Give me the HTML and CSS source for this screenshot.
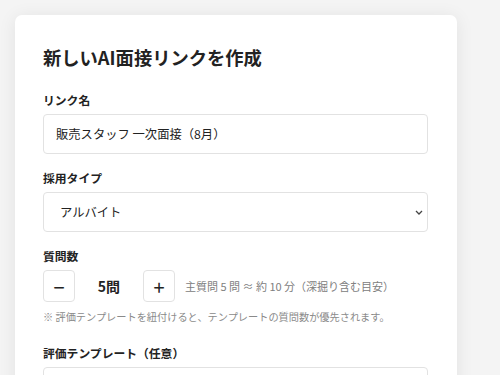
FILE: index.html
```html
<!DOCTYPE html>
<html lang="ja">

<head>
    <meta charset="UTF-8">
    <title>新しいAI面接リンクを作成</title>
    <link rel="stylesheet" href="styles.css">
</head>

<body>

    <div class="card">
        <h1 class="title">新しいAI面接リンクを作成</h1>

        <div class="field">
            <label class="label">リンク名</label>
            <div class="input">販売スタッフ 一次面接（8月）</div>
        </div>

        <div class="field">
            <label class="label">採用タイプ</label>
            <div class="input select">
                <span>アルバイト</span>
                <svg class="chevron" width="8" height="5" viewBox="0 0 8 5">
                    <path d="M1 1 L4 4 L7 1" fill="none" stroke="#444" stroke-width="1.3" />
                </svg>
            </div>
        </div>

        <div class="field">
            <label class="label">質問数</label>
            <div class="counter">
                <div class="step">&minus;</div>
                <div class="count">5問</div>
                <div class="step">+</div>
                <div class="hint">主質問 5 問 ≈ 約 10 分（深掘り含む目安）</div>
            </div>
            <p class="note">※ 評価テンプレートを紐付けると、テンプレートの質問数が優先されます。</p>
        </div>

        <div class="field">
            <label class="label">評価テンプレート（任意）</label>
            <div class="input"></div>
        </div>
    </div>

</body>

</html>
```

FILE: styles.css
```css
body {
    margin: 0;
    padding: 15px 43px 0 15px;
    background-color: #f4f4f4;
    font-family: "Noto Sans CJK JP", "Noto Sans", sans-serif;
    color: #222;
    overflow: hidden;
    height: 375px;
    box-sizing: border-box;
}

.card {
    background-color: #fff;
    border-radius: 7px;
    box-shadow: 0 2px 18px rgba(0, 0, 0, 0.08);
    padding: 27px 29px 40px 28px;
    display: flex;
    flex-direction: column;
    gap: 15px;
}

.title {
    margin: 0 0 4px 0;
    font-size: 18.3px;
    line-height: 30px;
    font-weight: 700;
    color: #222;
}

.field {
    display: flex;
    flex-direction: column;
}

.label {
    font-size: 11.8px;
    font-weight: 700;
    line-height: 18px;
    margin-bottom: 5px;
    color: #222;
}

.input {
    height: 40px;
    box-sizing: border-box;
    border: 1px solid #e2e2e2;
    border-radius: 4px;
    padding: 0 12px;
    display: flex;
    align-items: center;
    font-size: 12.3px;
    color: #222;
}

.select {
    justify-content: space-between;
    padding: 0 4px 0 16px;
}

.counter {
    display: flex;
    align-items: center;
}

.step {
    width: 32px;
    height: 32px;
    box-sizing: border-box;
    border: 1px solid #e2e2e2;
    border-radius: 4px;
    display: flex;
    justify-content: center;
    align-items: center;
    font-size: 20px;
    color: #222;
}

.count {
    width: 68px;
    text-align: center;
    font-size: 14px;
    font-weight: 700;
}

.hint {
    margin-left: 10px;
    font-size: 11px;
    color: #808080;
}

.note {
    margin: 7px 0 5px 0;
    font-size: 10.2px;
    color: #8a8a8a;
}
```
